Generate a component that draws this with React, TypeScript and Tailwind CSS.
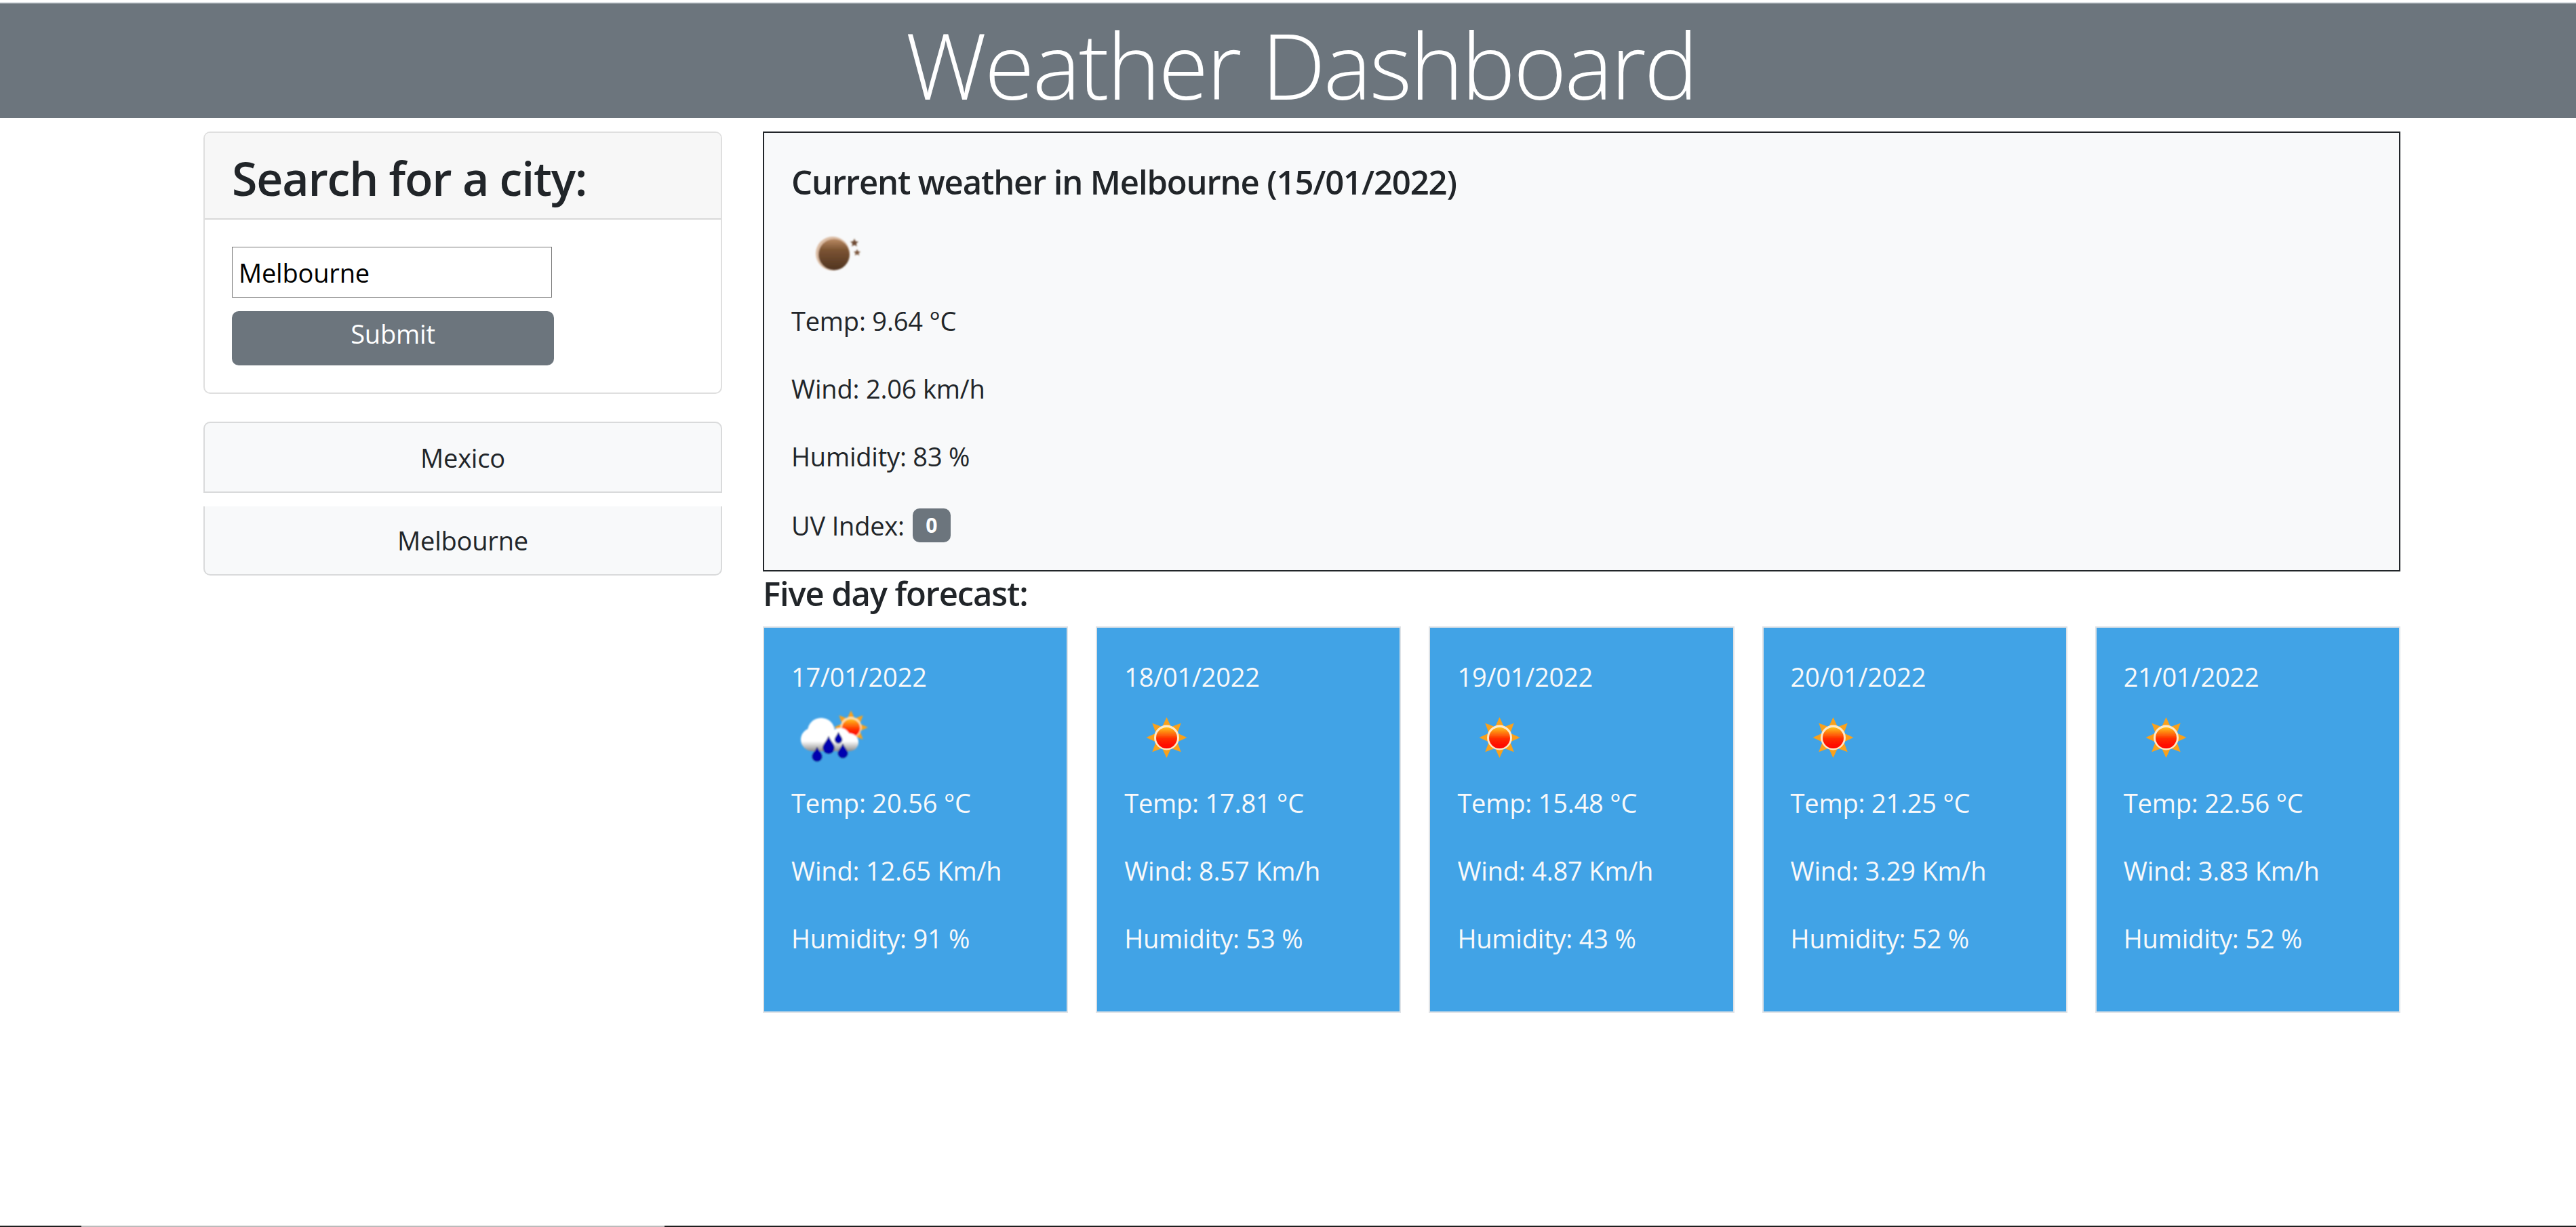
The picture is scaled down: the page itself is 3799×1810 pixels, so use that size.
const font = '"Open Sans", "Noto Sans", sans-serif';

function BrownIcon() {
  return (
    <svg width="125" height="125" viewBox="0 0 125 125" className="inline-block align-middle">
      <defs>
        <linearGradient id="ballG" x1="0" y1="0" x2="0" y2="1">
          <stop offset="0" stopColor="#b98a63" />
          <stop offset="0.35" stopColor="#7c5433" />
          <stop offset="1" stopColor="#4f3320" />
        </linearGradient>
        <filter id="soft1"><feGaussianBlur stdDeviation="0.8" /></filter>
      </defs>
      <g filter="url(#soft1)">
        <circle cx="61" cy="63" r="25" fill="#dcbda4" />
        <circle cx="63" cy="64.500" r="23" fill="url(#ballG)" />
        <path d="M93 41l1.8 4 4.2.4-3.2 2.8 1 4.3-3.8-2.3-3.8 2.3 1-4.3-3.2-2.8 4.2-.4z" fill="#6d4a30" />
        <path d="M97 56.500l1.500 3.200 3.500.4-2.600 2.300.8 3.500-3.200-1.900-3.200 1.900.8-3.500-2.600-2.300 3.500-.4z" fill="#7b573c" />
      </g>
    </svg>
  );
}

function SunRays({ cx, cy, r, tip, w }: { cx: number; cy: number; r: number; tip: number; w: number }) {
  const angles = [0, 45, 90, 135, 180, 225, 270, 315];
  return (
    <>
      {angles.map((a) => (
        <polygon
          key={a}
          points={`${cx - w},${cy - r} ${cx},${cy - tip} ${cx + w},${cy - r}`}
          fill="#f9a11b"
          transform={`rotate(${a} ${cx} ${cy})`}
        />
      ))}
    </>
  );
}

function SunIcon({ id }: { id: string }) {
  return (
    <svg width="125" height="125" viewBox="0 0 125 125" className="inline-block align-middle">
      <defs>
        <linearGradient id={id} x1="0" y1="0" x2="0" y2="1">
          <stop offset="0" stopColor="#ffc21a" />
          <stop offset="0.55" stopColor="#ff2a00" />
          <stop offset="1" stopColor="#ff0000" />
        </linearGradient>
        <filter id={`${id}b`}><feGaussianBlur stdDeviation="0.6" /></filter>
      </defs>
      <g filter={`url(#${id}b)`}>
        <SunRays cx={62.5} cy={64} r={17} tip={30} w={6} />
        <circle cx="62.5" cy="64" r="18.500" fill="#ffe9c8" />
        <circle cx="62.5" cy="64.500" r="15.500" fill={`url(#${id})`} />
      </g>
    </svg>
  );
}

function Drop({ x, y, r }: { x: number; y: number; r: number }) {
  return (
    <path
      d={`M${x} ${y - r * 2} C${x + r * 0.3} ${y - r * 1.2} ${x + r} ${y - r * 0.6} ${x + r} ${y} A${r} ${r} 0 1 1 ${x - r} ${y} C${x - r} ${y - r * 0.6} ${x - r * 0.3} ${y - r * 1.2} ${x} ${y - r * 2}Z`}
      fill="#0202b0"
      stroke="#1c2a66"
      strokeWidth="0.8"
    />
  );
}

function RainIcon() {
  return (
    <svg width="125" height="125" viewBox="0 0 125 125" className="inline-block align-middle">
      <defs>
        <linearGradient id="rainSun" x1="0" y1="0" x2="0" y2="1">
          <stop offset="0" stopColor="#ffc21a" />
          <stop offset="0.6" stopColor="#ff2a00" />
          <stop offset="1" stopColor="#ff0000" />
        </linearGradient>
        <linearGradient id="cloudG" gradientUnits="userSpaceOnUse" x1="0" y1="35" x2="0" y2="84">
          <stop offset="0" stopColor="#ffffff" />
          <stop offset="0.7" stopColor="#ffffff" />
          <stop offset="1" stopColor="#8d8d8d" />
        </linearGradient>
        <filter id="rainB"><feGaussianBlur stdDeviation="0.8" /></filter>
      </defs>
      <g filter="url(#rainB)">
        <SunRays cx={88} cy={49} r={14} tip={25} w={5} />
        <circle cx="88" cy="49" r="15.500" fill="#ffe3b0" />
        <circle cx="88" cy="50" r="13.500" fill="url(#rainSun)" />
        <g fill="url(#cloudG)">
          <circle cx="44" cy="55" r="20" />
          <circle cx="31" cy="67" r="17" />
          <circle cx="72" cy="65" r="15" />
          <circle cx="86" cy="71" r="13" />
          <rect x="30" y="60" width="56" height="24" />
        </g>
        <Drop x={55} y={79} r={8.5} />
        <Drop x={69.5} y={67} r={5.5} />
        <Drop x={76} y={87} r={7} />
        <Drop x={38} y={92} r={7} />
      </g>
    </svg>
  );
}

const days = [
  { date: "17/01/2022", temp: "20.56", wind: "12.65", hum: "91", icon: "rain" },
  { date: "18/01/2022", temp: "17.81", wind: "8.57", hum: "53", icon: "s1" },
  { date: "19/01/2022", temp: "15.48", wind: "4.87", hum: "43", icon: "s2" },
  { date: "20/01/2022", temp: "21.25", wind: "3.29", hum: "52", icon: "s3" },
  { date: "21/01/2022", temp: "22.56", wind: "3.83", hum: "52", icon: "s4" },
];

export default function App() {
  return (
    <div
      className="h-[1810px] flex flex-col bg-white text-[#212529] text-[38px] leading-[60px] tracking-[-0.2px] overflow-hidden"
      style={{ fontFamily: font }}
    >
      <div className="mt-[3px] border-t-[2.5px] border-[#dee2e6] bg-[#6c757d] h-[171px] pt-[12px] pl-[38px] text-center text-white text-[134px] leading-[156px] font-light tracking-[-3px]">
        Weather Dashboard
      </div>
      <main className="flex-1 flex items-start gap-[60px] pl-[300px] pt-[20px]">
        <aside className="w-[765px] flex flex-col">
          <section className="border-[2.5px] border-[#dfdfdf] rounded-[10px] overflow-hidden">
            <h3 className="bg-[#f7f7f7] border-b-[2.5px] border-[#d9d9d9] px-[40px] pt-[25px] pb-[17px] text-[68px] leading-[84px] font-semibold tracking-[-1.2px]">
              Search for a city:
            </h3>
            <div className="p-[40px] flex flex-col items-start gap-[20px]">
              <input
                readOnly
                defaultValue="Melbourne"
                className="w-[472px] h-[75px] border border-[#767676] px-[9px] text-black bg-white outline-none"
              />
              <button className="w-[475px] h-[80px] bg-[#6c757d] text-white rounded-[10px] pb-[14px] text-center">
                Submit
              </button>
            </div>
          </section>
          <button className="mt-[41px] h-[105px] bg-[#f8f9fa] border-[2.5px] border-[#d9dadb] rounded-t-[10px] text-center">
            Mexico
          </button>
          <button className="mt-[20px] h-[102px] bg-[#f8f9fa] border-[2.5px] border-t-0 border-[#d9dadb] rounded-b-[10px] text-center">
            Melbourne
          </button>
        </aside>
        <div className="w-[2415px] flex flex-col">
          <section className="h-[649px] bg-[#f8f9fa] border-[2.5px] border-[#212529] px-[40px] pt-[42px]">
            <h5 className="text-[49px] leading-[60px] font-semibold mb-[13px] tracking-[-1.15px]">
              Current weather in Melbourne (15/01/2022)
            </h5>
            <div className="h-[125px] flex items-center">
              <BrownIcon />
            </div>
            <p className="mt-[7px] mb-[40px]">Temp: 9.64 °C</p>
            <p className="mb-[40px]">Wind: 2.06 km/h</p>
            <p className="mb-[42px]">Humidity: 83 %</p>
            <p className="flex items-center gap-[12px]">
              UV Index:
              <span className="w-[56px] h-[50px] rounded-[10px] bg-[#6c757d] text-white text-[30px] leading-[50px] font-bold text-center">
                0
              </span>
            </p>
          </section>
          <h5 className="h-[81px] pt-[2px] text-[49px] leading-[60px] font-semibold tracking-[-1.15px]">Five day forecast:</h5>
          <div className="grid grid-cols-5 gap-[41px]">
            {days.map((d) => (
              <article
                key={d.date}
                className="h-[570px] bg-[#41a3e6] border-[2.5px] border-[#dee2e6] px-[40px] pt-[42px] text-[#f8f9fa]"
              >
                <p>{d.date}</p>
                <div className="h-[125px] -mt-[4px] flex items-center">
                  {d.icon === "rain" ? <RainIcon /> : <SunIcon id={d.icon} />}
                </div>
                <p className="mt-[5px] mb-[40px]">Temp: {d.temp} °C</p>
                <p className="mb-[40px]">Wind: {d.wind} Km/h</p>
                <p>Humidity: {d.hum} %</p>
              </article>
            ))}
          </div>
        </div>
      </main>
      <div className="h-[2.5px] bg-[#1f1f1f] pl-[120px]">
        <div className="w-[860px] h-full bg-[#bbbbbb]" />
      </div>
    </div>
  );
}
